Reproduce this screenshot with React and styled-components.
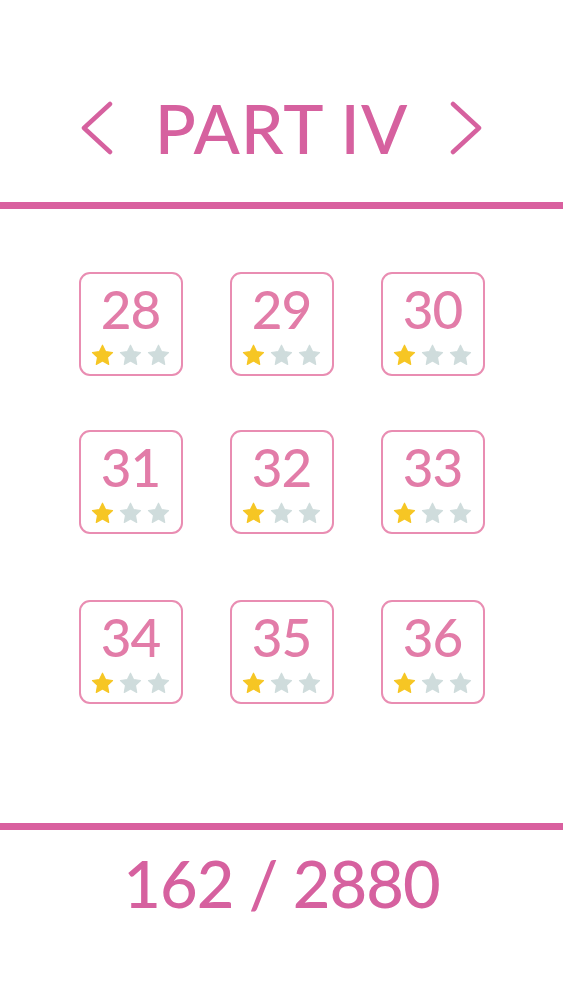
import React from "react";
import styled, { createGlobalStyle } from "styled-components";

const GlobalStyle = createGlobalStyle`
  body {
    margin: 0;
    background: #ffffff;
    font-family: Lato, "Open Sans", sans-serif;
  }
`;

const Page = styled.div`
  display: flex;
  flex-direction: column;
  width: 100%;
  height: 1000px;
  background: #ffffff;
`;

const Header = styled.header`
  display: flex;
  align-items: center;
  justify-content: center;
  gap: 42px;
  height: 202px;
  padding-top: 54px;
  box-sizing: border-box;
`;

const Title = styled.h1`
  margin: 0;
  font-size: 68px;
  font-weight: 500;
  line-height: 1;
  color: #d6619f;
  letter-spacing: 1px;
`;

const Arrow = styled.button`
  display: flex;
  padding: 0;
  border: none;
  background: none;
  cursor: pointer;
`;

const Divider = styled.hr`
  flex: none;
  margin: 0;
  border: none;
  height: 7px;
  background: #d9609f;
`;

const Levels = styled.section`
  display: flex;
  flex-direction: column;
  align-items: center;
  height: 614px;
  box-sizing: border-box;
  padding-top: 63px;
`;

const Row = styled.div`
  display: flex;
  gap: 47px;
  margin-top: ${(p) => p.$offset || 0}px;
`;

const Tile = styled.div`
  display: flex;
  flex-direction: column;
  align-items: center;
  width: 104px;
  height: 104px;
  box-sizing: border-box;
  border: 2px solid #e98db2;
  border-radius: 11px;
  padding-top: 8px;
`;

const Number = styled.span`
  font-size: 53px;
  font-weight: 500;
  line-height: 1;
  color: #e27ca8;
  letter-spacing: -1px;
`;

const Stars = styled.div`
  display: flex;
  gap: 5px;
  margin-top: 9px;
`;

const Footer = styled.footer`
  display: flex;
  justify-content: center;
  padding-top: 21px;
`;

const Score = styled.span`
  font-size: 65px;
  font-weight: 500;
  line-height: 1;
  color: #d6619f;
  letter-spacing: -1px;
`;

const Chevron = ({ dir }) => (
  <svg width="32" height="54" viewBox="0 0 32 54">
    <polyline
      points={dir === "left" ? "29,3 3,27 29,51" : "3,3 29,27 3,51"}
      fill="none"
      stroke="#d6619f"
      strokeWidth="4.5"
      strokeLinecap="round"
      strokeLinejoin="round"
    />
  </svg>
);

const Star = ({ on }) => (
  <svg width="23" height="22" viewBox="0 0 24 23">
    <path
      d="M12 1.2l3.2 6.7 7.3 1-5.3 5.1 1.3 7.3L12 17.8l-6.5 3.5 1.3-7.3L1.5 8.9l7.3-1z"
      fill={on ? "#f6c624" : "#cfdcdc"}
      stroke={on ? "#f6c624" : "#cfdcdc"}
      strokeWidth="1.2"
      strokeLinejoin="round"
    />
  </svg>
);

const rows = [
  { offset: 0, levels: [28, 29, 30] },
  { offset: 54, levels: [31, 32, 33] },
  { offset: 66, levels: [34, 35, 36] },
];

export default function App() {
  return (
    <Page>
      <GlobalStyle />
      <Header>
        <Arrow aria-label="previous">
          <Chevron dir="left" />
        </Arrow>
        <Title>PART IV</Title>
        <Arrow aria-label="next">
          <Chevron dir="right" />
        </Arrow>
      </Header>
      <Divider />
      <Levels>
        {rows.map((row) => (
          <Row key={row.levels[0]} $offset={row.offset}>
            {row.levels.map((n) => (
              <Tile key={n}>
                <Number>{n}</Number>
                <Stars>
                  <Star on />
                  <Star />
                  <Star />
                </Stars>
              </Tile>
            ))}
          </Row>
        ))}
      </Levels>
      <Divider />
      <Footer>
        <Score>162 / 2880</Score>
      </Footer>
    </Page>
  );
}
